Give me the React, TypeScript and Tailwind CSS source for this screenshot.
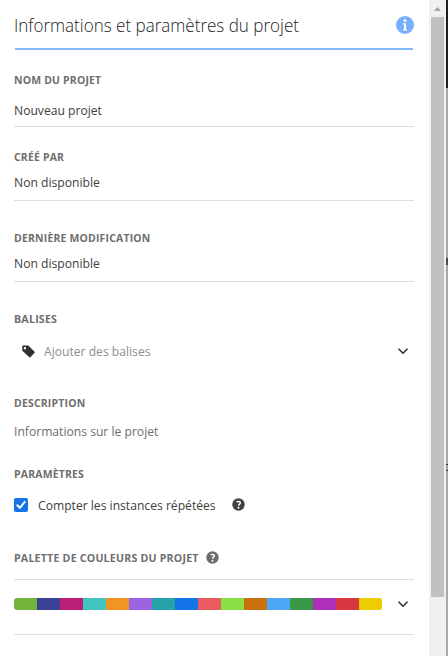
import React from "react";

const palette = [
  "bg-[#72b53a]", "bg-[#3b4296]", "bg-[#bb1e75]", "bg-[#40c5c1]",
  "bg-[#f29423]", "bg-[#9d64e1]", "bg-[#23a2a8]", "bg-[#1473e6]",
  "bg-[#ec5b62]", "bg-[#8ddf46]", "bg-[#c9700f]", "bg-[#4ca7f4]",
  "bg-[#389847]", "bg-[#b02fba]", "bg-[#d7373f]", "bg-[#edcc00]",
];

function Label({ children, className = "", fit = "scale-x-[0.95]" }: { children: React.ReactNode; className?: string; fit?: string }) {
  return (
    <h2 className={`h-4 text-[11px] leading-4 font-bold tracking-[0.2px] whitespace-nowrap text-[#6e6e6e] ${className}`}>
      <span className={`inline-block origin-left ${fit}`}>{children}</span>
    </h2>
  );
}

function Value({ children, className = "" }: { children: React.ReactNode; className?: string }) {
  return (
    <div className={`h-5 text-[13.5px] leading-5 whitespace-nowrap ${className}`}>
      <span className="inline-block origin-left scale-x-[0.898]">{children}</span>
    </div>
  );
}

function Chevron() {
  return (
    <svg className="h-[7px] w-[10px] shrink-0" viewBox="0 0 10 7" fill="none" stroke="#333" strokeWidth="1.6" strokeLinecap="round" strokeLinejoin="round">
      <path d="M1 1.2 5 5.2 9 1.2" />
    </svg>
  );
}

function Help({ color }: { color: string }) {
  return (
    <svg className="-mt-[2px] size-[13px] shrink-0" viewBox="0 0 13 13">
      <circle cx="6.5" cy="6.5" r="6.2" fill={color} />
      <path d="M4.7 4.1C5.4 3.4 8.3 2.9 8.3 4.9 8.3 6.2 6.5 6.3 6.5 7.8" fill="none" stroke="#fff" strokeWidth="1.45" />
      <circle cx="6.5" cy="9.8" r="1" fill="#fff" />
    </svg>
  );
}

export default function App() {
  return (
    <div className="flex h-[656px] w-[448px] overflow-hidden bg-white font-['Open_Sans','Noto_Sans',sans-serif] text-[#404040]">
      <main className="w-[429px] shrink-0 pr-[15px] pl-[14px]">
        <header className="flex h-12 items-center justify-between">
          <h1 className="mt-[2px] w-[370px] text-[19px] leading-6 font-light whitespace-nowrap text-[#242424]">
            <span className="inline-block origin-left scale-x-[0.896]">Informations et paramètres du projet</span>
          </h1>
          <svg className="mt-[2px] size-[18px] shrink-0" viewBox="0 0 18 18">
            <circle cx="9" cy="9" r="9" fill="#78aefe" />
            <circle cx="9" cy="4.6" r="1.45" fill="#fff" />
            <path d="M7 7.2h3v6h1v1.3H7v-1.3h1V8.5H7z" fill="#fff" />
          </svg>
        </header>
        <div className="mx-[1px] h-[2px] bg-[#80b9ff]" />
        <section className="h-[77px] border-b border-[#dfdfdf] pt-[22px]">
          <Label>NOM DU PROJET</Label>
          <Value className="mt-[12px]">Nouveau projet</Value>
        </section>
        <section className="h-[74px] border-b border-[#dfdfdf] pt-[22px]">
          <Label>CRÉÉ PAR</Label>
          <Value className="mt-[7px]">Non disponible</Value>
        </section>
        <section className="h-[81px] border-b border-[#dfdfdf] pt-[29px]">
          <Label>DERNIÈRE MODIFICATION</Label>
          <Value className="mt-[7px]">Non disponible</Value>
        </section>
        <section className="h-[113px] pt-[29px]">
          <Label fit="scale-x-[0.97]">BALISES</Label>
          <div className="mt-[14px] flex h-5 items-center pr-[6px] pl-2">
            <svg className="mr-[9px] size-[13px] shrink-0" viewBox="0 0 13 13">
              <path fillRule="evenodd" d="M.8.5h5.5L12.6 6.8q.5.5 0 1L8.4 12.2q-.5.5-1 0L.3 5.7V1Q.3.5.8.5ZM3 2a1.2 1.2 0 1 0 0 2.4A1.2 1.2 0 0 0 3 2Z" fill="#323232" />
            </svg>
            <Value className="flex-1 text-[#8e8e8e]">Ajouter des balises</Value>
            <Chevron />
          </div>
        </section>
        <section className="h-[71px]">
          <Label>DESCRIPTION</Label>
          <Value className="mt-[10px] text-[#6e6e6e]">Informations sur le projet</Value>
        </section>
        <section className="h-[84px]">
          <Label>PARAMÈTRES</Label>
          <div className="mt-[13px] flex h-5 items-center">
            <svg className="mr-[10px] size-[14px] shrink-0" viewBox="0 0 14 14">
              <rect width="14" height="14" rx="2" fill="#1473e6" />
              <path d="m3.3 7.2 2.5 2.7 5-6" fill="none" stroke="#fff" strokeWidth="2" strokeLinecap="round" strokeLinejoin="round" />
            </svg>
            <Value className="w-[194px]">Compter les instances répétées</Value>
            <Help color="#424242" />
          </div>
        </section>
        <section className="h-[30px] border-b border-[#dfdfdf]">
          <div className="flex h-4 items-center">
            <Label className="w-[192px]" fit="scale-x-[0.967]">PALETTE DE COULEURS DU PROJET</Label>
            <Help color="#6e6e6e" />
          </div>
        </section>
        <section className="flex h-[55px] items-start border-b border-[#dfdfdf] pt-[18px] pr-[6px]">
          <div className="flex h-3 w-[368px] overflow-hidden rounded-[3px]">
            {palette.map((c) => <span key={c} className={`w-[23px] ${c}`} />)}
          </div>
          <div className="ml-auto pt-[3px]"><Chevron /></div>
        </section>
      </main>
      <aside className="flex w-[17px] shrink-0 flex-col items-center bg-[#f0f0f0]">
        <svg className="h-[17px] w-[17px] shrink-0" viewBox="0 0 17 17"><path d="M5 11 8.5 7 12 11Z" fill="#a3a3a3" /></svg>
        <div className="h-[580px] w-[13px] bg-[#c1c1c1]" />
      </aside>
      <aside className="flex w-[2px] shrink-0 flex-col bg-[#a7a7a7]">
        <div className="h-[88px] bg-[#1e1e1e]" />
        <div className="mt-[170px] h-[7px] bg-[#514a48]" />
        <div className="mt-[199px] h-[7px] border-y border-[#333] bg-[#93a5a6]" />
      </aside>
    </div>
  );
}
